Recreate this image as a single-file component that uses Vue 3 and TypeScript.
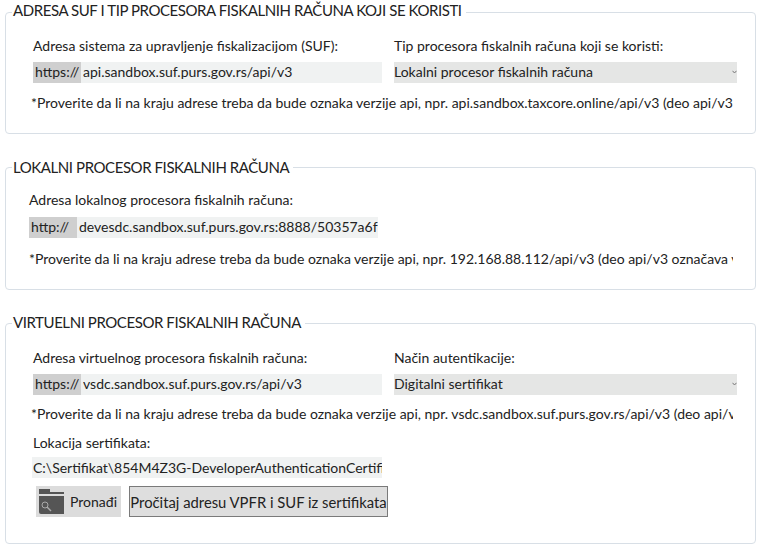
<script setup lang="ts">
import { ref } from 'vue'

const sufAddress = ref('api.sandbox.suf.purs.gov.rs/api/v3')
const lpfrAddress = ref('devesdc.sandbox.suf.purs.gov.rs:8888/50357a6f')
const vpfrAddress = ref('vsdc.sandbox.suf.purs.gov.rs/api/v3')
const certPath = ref('C:\\Sertifikat\\854M4Z3G-DeveloperAuthenticationCertificate.pfx')
const processorType = ref('Lokalni procesor fiskalnih računa')
const authType = ref('Digitalni sertifikat')

const note = 'Proverite da li na kraju adrese treba da bude oznaka verzije api, npr.'
</script>

<template>
  <div class="page">
    <fieldset class="box box-suf">
      <legend>ADRESA SUF I TIP PROCESORA FISKALNIH RAČUNA KOJI SE KORISTI</legend>
      <div class="box-body">
        <div class="two-cols">
          <div class="field">
            <label>Adresa sistema za upravljenje fiskalizacijom (SUF):</label>
            <div class="url-input">
              <span class="prefix">https://</span>
              <input v-model="sufAddress" type="text" />
            </div>
          </div>
          <div class="field">
            <label>Tip procesora fiskalnih računa koji se koristi:</label>
            <div class="select-wrap">
              <select v-model="processorType">
                <option>Lokalni procesor fiskalnih računa</option>
                <option>Virtuelni procesor fiskalnih računa</option>
              </select>
              <svg class="chevron" width="5" height="4" viewBox="0 0 5 4">
                <path d="M0.5 0.8L2.5 3L4.5 0.8" fill="none" stroke="#777" stroke-width="1" />
              </svg>
            </div>
          </div>
        </div>
        <p class="note">*{{ note }} api.sandbox.taxcore.online/api/v3 (deo api/v3 označava verziju api-ja)</p>
      </div>
    </fieldset>

    <fieldset class="box box-lpfr">
      <legend>LOKALNI PROCESOR FISKALNIH RAČUNA</legend>
      <div class="box-body">
        <div class="field">
          <label>Adresa lokalnog procesora fiskalnih računa:</label>
          <div class="url-input">
            <span class="prefix">http://</span>
            <input v-model="lpfrAddress" type="text" />
          </div>
        </div>
        <p class="note">*{{ note }} 192.168.88.112/api/v3 (deo api/v3 označava verziju api-ja)</p>
      </div>
    </fieldset>

    <fieldset class="box box-vpfr">
      <legend>VIRTUELNI PROCESOR FISKALNIH RAČUNA</legend>
      <div class="box-body">
        <div class="two-cols">
          <div class="field">
            <label>Adresa virtuelnog procesora fiskalnih računa:</label>
            <div class="url-input">
              <span class="prefix">https://</span>
              <input v-model="vpfrAddress" type="text" />
            </div>
          </div>
          <div class="field">
            <label>Način autentikacije:</label>
            <div class="select-wrap">
              <select v-model="authType">
                <option>Digitalni sertifikat</option>
                <option>Korisničko ime i lozinka</option>
              </select>
              <svg class="chevron" width="5" height="4" viewBox="0 0 5 4">
                <path d="M0.5 0.8L2.5 3L4.5 0.8" fill="none" stroke="#777" stroke-width="1" />
              </svg>
            </div>
          </div>
        </div>
        <p class="note">*{{ note }} vsdc.sandbox.suf.purs.gov.rs/api/v3 (deo api/v3 označava verziju api-ja)</p>
        <div class="field cert">
          <label>Lokacija sertifikata:</label>
          <input v-model="certPath" class="cert-input" type="text" />
        </div>
        <div class="actions">
          <button class="find-btn" type="button">
            <svg width="25" height="25" viewBox="0 0 25 25">
              <rect x="0" y="0" width="11" height="4" fill="#555" />
              <rect x="0" y="3" width="25" height="2" fill="#555" />
              <path d="M0 7H25V25H2Q0 25 0 23V7Z" fill="#555" />
              <circle cx="6" cy="16" r="3" fill="none" stroke="#aaa" stroke-width="1" />
              <path d="M8 18L12 22" stroke="#aaa" stroke-width="1.4" />
            </svg>
            <span>Pronađi</span>
          </button>
          <button class="read-btn" type="button">Pročitaj adresu VPFR i SUF iz sertifikata</button>
        </div>
      </div>
    </fieldset>
  </div>
</template>

<style scoped>
.page {
  width: 762px;
  height: 548px;
  box-sizing: border-box;
  padding: 1px 6px 0 5px;
  overflow: hidden;
  font-family: Lato, "Open Sans", sans-serif;
  font-size: 14px;
  color: #222;
}

.box {
  box-sizing: border-box;
  margin: 0;
  padding: 0;
  border: 1px solid #d8dfe6;
  border-radius: 4px;
  min-width: 0;
  overflow: hidden;
}

.box legend {
  margin-left: 6px;
  padding: 0 4px 0 1px;
  font-size: 15px;
  line-height: 18px;
  letter-spacing: -0.43px;
  color: #222;
}

.box-suf {
  height: 133px;
}

.box-suf legend {
  padding-bottom: 4px;
}

.box-suf .box-body {
  padding: 14px 0 0 27px;
}

.box-lpfr {
  height: 132px;
  margin-top: 24px;
}

.box-lpfr .box-body {
  padding: 15px 0 0 23px;
}

.box-vpfr {
  height: 231px;
  margin-top: 23px;
}

.box-vpfr legend {
  padding-bottom: 2px;
}

.box-vpfr .box-body {
  padding: 16px 0 0 27px;
}

.two-cols {
  display: flex;
  gap: 12px;
}

.field {
  display: flex;
  flex-direction: column;
  width: 349px;
}

.field label {
  height: 17px;
  line-height: 17px;
  margin-bottom: 8px;
}

.box-lpfr .field label {
  margin-bottom: 9px;
}

.two-cols .field + .field {
  width: 343px;
}

.url-input {
  display: flex;
  height: 21px;
  background: #f0f2f2;
}

.prefix {
  width: 48px;
  flex-shrink: 0;
  background: #cfcfcf;
  padding-left: 2px;
  box-sizing: border-box;
  line-height: 19px;
}

.url-input input {
  flex: 1;
  min-width: 0;
  padding-bottom: 2px;
}

input {
  border: none;
  outline: none;
  background: transparent;
  padding: 0 0 0 2px;
  font: inherit;
  color: #222;
}

.select-wrap {
  position: relative;
  height: 21px;
}

select {
  appearance: none;
  display: block;
  width: 100%;
  height: 21px;
  box-sizing: border-box;
  border: none;
  border-radius: 0;
  outline: none;
  background: #e5e6e5;
  padding: 0 0 3px 0;
  font: inherit;
  color: #222;
}

/* small arrow laid over the select */
.chevron {
  position: absolute;
  right: 0;
  top: 8px;
}

.note {
  margin: 11px 0 0 -2px;
  width: 702px;
  line-height: 18px;
  white-space: nowrap;
  overflow: hidden;
}

.box-lpfr .note {
  margin: 12px 0 0 0;
  width: 704px;
}

.box-vpfr .note {
  margin-top: 10px;
}

.cert {
  margin-top: 11px;
}

.cert label {
  margin-bottom: 6px;
}

.cert-input {
  height: 21px;
  width: 350px;
  margin-left: -1px;
  padding-left: 1px;
  box-sizing: border-box;
  background: #f0f2f2;
}

.actions {
  display: flex;
  align-items: flex-start;
  gap: 8px;
  margin-top: 8px;
  margin-left: 3px;
}

.find-btn {
  display: flex;
  align-items: center;
  gap: 6px;
  width: 85px;
  height: 31px;
  padding: 3px 0 3px 3px;
  box-sizing: border-box;
  border: none;
  background: #dcdcdc;
  font: inherit;
  color: #222;
}

.read-btn {
  height: 31px;
  width: 259px;
  padding: 0;
  white-space: nowrap;
  box-sizing: border-box;
  border: 1px solid #7a7a7a;
  background: #dedede;
  font: inherit;
  font-size: 14.8px;
  color: #222;
}
</style>

<style>
body {
  background: #fff;
}
</style>
